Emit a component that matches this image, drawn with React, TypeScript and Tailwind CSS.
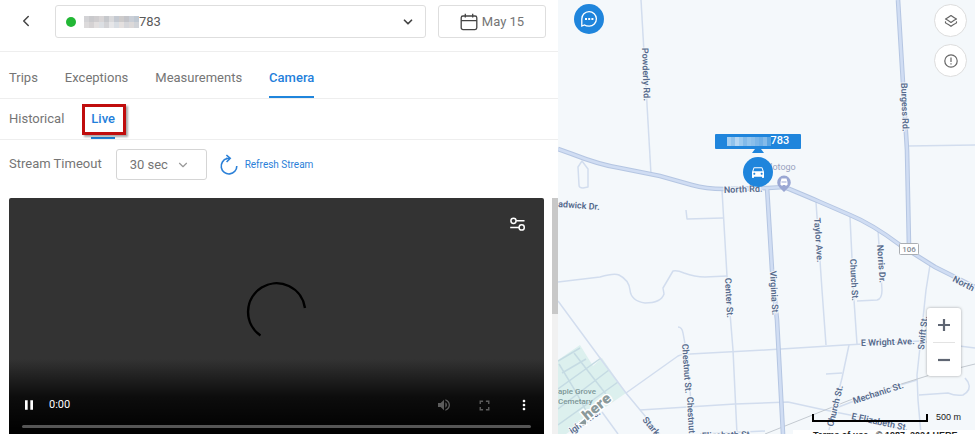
import { ChevronDown, ChevronLeft } from "lucide-react";
import { MdDirectionsCar, MdFullscreen, MdMoreVert, MdPause, MdVolumeUp } from "react-icons/md";

const TABS = ["Trips", "Exceptions", "Measurements", "Camera"];
const CAMERA_TABS = ["Historical", "Live"];

const MASK_COLORS = [
  "#d3d3d6", "#c9c9cc", "#cfcdcf", "#d8d5d6", "#c6c8cc", "#d9d9db", "#c4c9d1", "#cdcbcb", "#c3c4c9", "#c9ced6", "#bfc8d2",
  "#dcdadb", "#d5d2d3", "#e2dfdf", "#dcdfe3", "#d3d3d6", "#e6e6e8", "#d8dde3", "#e4e0df", "#d5d6da", "#dcd9d9", "#d0d3d8",
];

const PIN_MASK_COLORS = [
  "#a5cef0", "#8fc2ec", "#b4d6f3", "#9ccaef", "#83bbea", "#94c5ed", "#8abfeb", "#7bb6e8", "#6fafe6", "#84bbea", "#5aa4e2",
];

const MAIN_ROADS = [
  "M558 149 L572 154 Q600 165 620 168 L660 176 L692 185 Q706 189 724 189 L768 188 L784 187 Q792 190 820 202 L850 215 Q872 224 900 245 L935 267 L975 287",
  "M898 0 L907 150 L909 247",
  "M767 187 L772 270 L777 320 L783 434",
];

const STREETS = [
  "M641 0 L651 174",
  "M908 146 L975 145",
  "M722 190 L727 276 L733 350 L737 434",
  "M686 210 L687 219 L723 218",
  "M582 161 L578 167 L579 185 Q579 188 583 188 L588 187 L588 169 Z",
  "M558 282 L600 277 Q614 273 619 275 Q629 280 630 290 Q631 301 645 303 Q661 303 664 294 L663 288 L673 271 Q677 270 684 273 Q695 277 705 277 L727 276",
  "M816 202 L822 290 L826 345",
  "M850 217 L854 300 L857 344",
  "M878 230 L882 290 Q882 299 877 300 L857 301",
  "M930 265 L926 290 L917 375 L918 400 L921 434",
  "M626 393 L678 356 Q682 354 690 354 L765 350 L845 345 L920 341 L975 348",
  "M849 345 L842 378 L828 434",
  "M826 374 L842 373",
  "M640 410 L735 404 L788 402 L820 409 L860 417 L905 430",
  "M836 408 L880 391 L917 380",
  "M919 395 L948 393 Q955 396 963 395 Q972 390 968 382 L965 378",
  "M558 301 L600 358 L626 393 L660 434",
  "M602 412 L618 434",
  "M678 327 Q682 327 683 333 L688 360 L693 434",
  "M700 434 L765 431",
];

const CEMETERY_PATHS = [
  "M558 361 L580 348",
  "M562 373 L586 359",
  "M558 389 L601 358",
  "M558 409 L609 370",
  "M558 425 L618 382",
  "M574 353 L612 402",
  "M559 364 L576 392 L590 418",
];

const STREET_LABELS = [
  { text: "Powderly Rd.", x: 642, y: 48, angle: 88 },
  { text: "Burgess Rd.", x: 901, y: 83, angle: 88 },
  { text: "Taylor Ave.", x: 814, y: 218, angle: 86 },
  { text: "Church St.", x: 850, y: 259, angle: 87 },
  { text: "Norris Dr.", x: 877, y: 245, angle: 86 },
  { text: "Virginia St.", x: 770, y: 271, angle: 87 },
  { text: "Center St.", x: 725, y: 278, angle: 87 },
  { text: "Chestnut St.", x: 682, y: 344, angle: 86 },
  { text: "Chestnut", x: 687, y: 397, angle: 87 },
  { text: "North Rd.", x: 724, y: 193, angle: -2 },
  { text: "adwick Dr.", x: 558, y: 207, angle: 4 },
  { text: "North", x: 952, y: 281, angle: 27 },
  { text: "E Wright Ave.", x: 861, y: 346, angle: -2 },
  { text: "Swift St.", x: 924, y: 350, angle: -84 },
  { text: "Mechanic St.", x: 854, y: 404, angle: -18 },
  { text: "Church St.", x: 833, y: 427, angle: -76 },
  { text: "E Elizabeth St.", x: 851, y: 419, angle: 12 },
  { text: "Stark", x: 642, y: 420, angle: 50 },
  { text: "Elizabeth St.", x: 702, y: 439, angle: -2 },
  { text: "ight Ave.", x: 572, y: 434, angle: -35 },
];

function MaskedDigits() {
  return (
    <span aria-hidden="true" className="grid w-[55px] grid-cols-11 grid-rows-2">
      {MASK_COLORS.map((color, i) => (
        <span key={i} className="h-[6px]" style={{ backgroundColor: color }} />
      ))}
    </span>
  );
}

function DeviceHeader() {
  return (
    <header className="flex h-[52px] items-start border-b border-[#eeeeee] pt-[5px] pr-3">
      <button type="button" aria-label="Back" className="flex h-8 w-[55px] items-center pl-[17px] text-[#444]">
        <ChevronLeft size={18} strokeWidth={2} />
      </button>
      <div className="relative flex h-[33px] flex-1 items-center rounded-[3px] border border-[#dedede] pl-[10px]">
        <span className="mr-2 size-[10px] rounded-full bg-[#22b735]" />
        <MaskedDigits />
        <select aria-label="Vehicle" className="h-full flex-1 appearance-none bg-transparent text-[13px] text-[#5a5a5a] outline-none">
          <option>783</option>
        </select>
        <ChevronDown size={14} strokeWidth={3} className="pointer-events-none absolute right-[10px] text-[#444]" />
      </div>
      <button type="button" className="ml-3 flex h-[33px] w-[108px] items-center justify-center gap-1 rounded-[3px] border border-[#dedede] text-[13px] text-[#757575]">
        <svg width="18" height="18" viewBox="0 0 18 18" fill="none" stroke="#444" strokeWidth="1.3">
          <rect x="1.2" y="3" width="15.6" height="13.6" rx="1.8" />
          <path d="M1.2 7.6 H16.8 M5.3 0.8 V4.6 M12.7 0.8 V4.6" />
        </svg>
        May 15
      </button>
    </header>
  );
}

function StreamControls() {
  return (
    <div className="flex h-[58px] items-start px-[9px] pt-[9px] text-[13px] text-[#757575]">
      <label htmlFor="timeout" className="leading-[30px]">Stream Timeout</label>
      <div className="relative ml-[14px] flex h-[31px] w-[91px] items-center rounded-[3px] border border-[#d5d5d5]">
        <select id="timeout" className="h-full w-full appearance-none bg-transparent pl-[13px] outline-none">
          <option>30 sec</option>
        </select>
        <ChevronDown size={14} strokeWidth={2} className="pointer-events-none absolute right-4 text-[#999]" />
      </div>
      <button type="button" className="ml-3 flex h-[31px] items-center gap-[6px] text-[10px] text-[#2b80d8]">
        <svg width="20" height="22" viewBox="0 0 20 22" fill="none" stroke="currentColor" strokeWidth="1.6">
          <path d="M8 4.6 A7.8 7.8 0 1 0 17.8 12" />
          <path d="M7.4 1 L11.2 4.4 L7.6 8" />
          <path d="M7 4.5 H11" />
        </svg>
        Refresh Stream
      </button>
    </div>
  );
}

function VideoPlayer() {
  return (
    <section aria-label="Live stream" className="relative ml-[9px] flex flex-1 flex-col rounded-t-[2px] bg-[#333333]">
      <div className="flex justify-end pt-[18px] pr-[18px]">
        <button type="button" aria-label="Stream settings" className="text-white">
          <svg width="17" height="16" viewBox="0 0 17 16" fill="none" stroke="currentColor" strokeWidth="1.5">
            <circle cx="4.5" cy="4.8" r="2.6" />
            <path d="M7.2 4.8 H15.5 M1.2 11.4 H10" />
            <circle cx="12.7" cy="11.4" r="2.6" />
          </svg>
        </button>
      </div>
      <div className="flex flex-1 justify-center pt-12">
        <svg width="64" height="64" viewBox="1 0 64 64" fill="none" stroke="#000" strokeWidth="2.4" className="self-start">
          <path d="M16.5 55.5 A28.6 28.6 0 1 1 61 28" />
        </svg>
      </div>
      <div className="absolute inset-x-0 bottom-0 bg-linear-to-b from-transparent via-black/75 to-black px-[13px] pt-[36px] pb-[6px]">
        <div className="flex h-5 items-center text-white">
          <button type="button" aria-label="Pause" className="mr-3 -ml-px"><MdPause size={16} /></button>
          <span className="flex-1 text-[11px]">0:00</span>
          <button type="button" aria-label="Volume" className="mr-6 text-[#5c5c5c]"><MdVolumeUp size={16} /></button>
          <button type="button" aria-label="Full screen" className="mr-[23px] text-[#5c5c5c]"><MdFullscreen size={17} /></button>
          <button type="button" aria-label="More options" className="-mr-px"><MdMoreVert size={16} /></button>
        </div>
        <div className="mt-[10px] h-[3px] rounded-full bg-[#555]" />
      </div>
    </section>
  );
}

function MapCanvas() {
  return (
    <svg viewBox="558 0 417 434" preserveAspectRatio="xMinYMin slice" className="h-full w-full" fill="none">
      <path d="M558 360 L580 345 L593 366 L602 358 L626 393 L600 411 L566 434 L558 434 Z" fill="#dcf0ee" />
      {CEMETERY_PATHS.map((d) => (
        <path key={d} d={d} stroke="#c5dbe3" strokeWidth="1.5" />
      ))}
      {STREETS.map((d) => (
        <path key={d} d={d} stroke="#d2ddee" strokeWidth="1.5" strokeLinejoin="round" />
      ))}
      <path d="M765 434 L850 400 L930 375 L975 364" stroke="#c3c9d0" />
      {MAIN_ROADS.map((d) => (
        <path key={d} d={d} stroke="#b5c6e2" strokeWidth="4.6" />
      ))}
      {MAIN_ROADS.map((d) => (
        <path key={d} d={d} stroke="#d0ddf3" strokeWidth="2.6" />
      ))}
      <g fill="#566a8c" stroke="#f4f8fb" strokeWidth="2" paintOrder="stroke" className="font-['Roboto',sans-serif] text-[9px] font-semibold">
        {STREET_LABELS.map((l) => (
          <text key={`${l.text}-${l.x}`} transform={`translate(${l.x} ${l.y}) rotate(${l.angle})`}>
            {l.text}
          </text>
        ))}
      </g>
      <g className="font-['Roboto',sans-serif] text-[8px] font-medium">
        <text x="558" y="394" fill="#7d9798">aple Grove</text>
        <text x="558" y="404" fill="#7d9798">Cemetary</text>
      </g>
      <text x="766" y="170" fill="#99a2c0" className="font-['Roboto',sans-serif] text-[9px]">Notogo</text>
      {/* place pin */}
      <path d="M784 192 L779.5 187.5 A6.8 6.8 0 1 1 788.5 187.5 Z" fill="#9aa7d3" />
      <path d="M780.5 182 L781.5 178.5 H786.5 L787.5 182 V185 H786.5 V186 H785.5 V185 H782.5 V186 H781.5 V185 H780.5 Z" fill="#fff" />
      <path d="M781.5 182 H786.5" stroke="#9aa7d3" />
      {/* route shield */}
      <rect x="899.5" y="243.5" width="19" height="11" rx="1" fill="#fff" stroke="#aaaeb3" />
      <text x="909" y="252" textAnchor="middle" fill="#858b94" className="font-['Roboto',sans-serif] text-[8px] font-medium">106</text>
      {/* provider mark */}
      <g transform="translate(587 421) rotate(-40)" stroke="#fff" strokeWidth="3" paintOrder="stroke" fill="#8b9a9b">
        <path d="M-8 -3 L2 -3 L-3 2 Z" />
        <text className="font-['Open_Sans',sans-serif] text-[14px] font-extrabold">here</text>
      </g>
    </svg>
  );
}

function VehiclePin() {
  return (
    <div className="absolute top-[134px] left-[157px] flex w-[86px] flex-col items-center">
      <div className="flex h-[15px] w-full items-center justify-center rounded-[1px] bg-[#1f85dc] text-[11px] font-medium text-white">
        <span aria-hidden="true" className="flex">
          {PIN_MASK_COLORS.map((color, i) => (
            <span key={i} className="h-[9px] w-1" style={{ backgroundColor: color }} />
          ))}
        </span>
        783
      </div>
      <svg width="12" height="4" viewBox="0 0 12 4"><path d="M3 0 H9 L12 4 H0 Z" fill="#1f85dc" /></svg>
      <div className="mt-1 flex size-[30px] items-center justify-center rounded-full bg-[#1f85dc] text-white">
        <MdDirectionsCar size={16} />
      </div>
    </div>
  );
}

function MapPanel() {
  return (
    <section aria-label="Map" className="relative min-w-0 overflow-hidden bg-[#f4f8fb]">
      <MapCanvas />
      <VehiclePin />
      <button type="button" aria-label="Chat" className="absolute top-1 left-4 flex size-[30px] items-center justify-center rounded-full bg-[#1f85dc] text-white">
        <svg width="18" height="18" viewBox="0 0 18 18" fill="none" stroke="currentColor" strokeWidth="1.3">
          <path d="M1.8 16 V9 A7.3 7.3 0 1 1 9.2 16.2 Q6 16.2 4.5 15 Z" />
          <path d="M5 9 H7 M8.2 9 H10.2 M11.4 9 H13.4" strokeWidth="1.8" />
        </svg>
      </button>
      <div className="absolute top-1 right-2 flex flex-col gap-[7px] text-[#666]">
        <button type="button" aria-label="Map layers" className="flex size-[33px] items-center justify-center rounded-full border border-[#dddddd] bg-white">
          <svg width="14" height="14" viewBox="0 0 14 14" fill="none" stroke="currentColor" strokeWidth="1.2" strokeLinejoin="round">
            <path d="M1.5 5 Q3.5 4.2 7 1.6 Q10.5 4.2 12.5 5 Q10.5 6 7 8.4 Q3.5 6 1.5 5 Z" />
            <path d="M1.8 7.5 Q0.8 8.7 2.5 9.5 Q4 10 7 12.3 Q10 10 11.5 9.5 Q13.2 8.7 12.2 7.5" />
          </svg>
        </button>
        <button type="button" aria-label="Alerts" className="flex size-[33px] items-center justify-center rounded-full border border-[#dddddd] bg-white">
          <svg width="14" height="14" viewBox="0 0 14 14" fill="none" stroke="currentColor" strokeWidth="1.2">
            <circle cx="7" cy="7" r="6.2" />
            <path d="M7 3.6 V8 M7 9.2 V10.5" />
          </svg>
        </button>
      </div>
      <div className="absolute right-[14px] bottom-[58px] flex w-[34px] flex-col items-center rounded-[3px] bg-white text-[#5f6673] shadow-[0_0_3px_rgba(0,0,0,0.35)]">
        <button type="button" aria-label="Zoom in" className="flex h-[34px] w-full items-center justify-center">
          <svg width="12" height="12" viewBox="0 0 12 12" stroke="currentColor" strokeWidth="2.2"><path d="M0 6 H12 M6 0 V12" /></svg>
        </button>
        <span className="h-px w-[22px] bg-[#e3e3e3]" />
        <button type="button" aria-label="Zoom out" className="flex h-[33px] w-full items-center justify-center">
          <svg width="12" height="12" viewBox="0 0 12 12" stroke="currentColor" strokeWidth="2.2"><path d="M0 6 H12" /></svg>
        </button>
      </div>
      <div className="absolute right-[14px] bottom-3 flex items-end gap-2">
        <span className="h-2 w-[116px] border-x-2 border-b-2 border-black" />
        <span className="font-['Liberation_Sans',sans-serif] text-[9px] leading-[10px] text-[#222]">500 m</span>
      </div>
      <p className="absolute right-0 bottom-0 h-1 w-[182px] overflow-hidden bg-white pl-5 font-['Liberation_Sans',sans-serif] text-[9px] leading-[11px] font-bold whitespace-nowrap text-[#222]">
        Terms of use &nbsp; © 1987–2024 HERE
      </p>
    </section>
  );
}

export default function App() {
  return (
    <div className="grid h-screen grid-cols-[558fr_417fr] overflow-hidden bg-white font-['Roboto',sans-serif]">
      <main className="flex min-w-0 flex-col">
        <DeviceHeader />
        <nav className="flex h-[47px] gap-[27px] border-b border-[#eeeeee] px-[9px] text-[13px] text-[#757575]">
          {TABS.map((tab) => (
            <a
              key={tab}
              href="#"
              className={tab === "Camera" ? "border-b-2 border-[#1f85dc] pt-4 font-medium text-[#1f7fdb]" : "pt-4"}
            >
              {tab}
            </a>
          ))}
        </nav>
        <nav className="flex h-[41px] gap-[27px] border-b border-[#eeeeee] px-[9px] text-[13px] text-[#757575]">
          {CAMERA_TABS.map((tab) => (
            <a
              key={tab}
              href="#"
              className={tab === "Live" ? "relative border-b-2 border-[#1f85dc] pt-[10px] font-medium text-[#1f7fdb]" : "pt-[10px]"}
            >
              {tab}
              {tab === "Live" && (
                <span className="absolute top-[5px] -right-[11px] -left-[9px] h-[31px] border-3 border-[#c00d0d] shadow-[2px_2px_2px_rgba(0,0,0,0.35)]" />
              )}
            </a>
          ))}
        </nav>
        <StreamControls />
        <div className="flex flex-1 gap-2">
          <VideoPlayer />
          <div className="w-[6px] bg-[#f1f1f1]">
            <div className="h-[49%] bg-[#c8c8c8]" />
          </div>
        </div>
      </main>
      <MapPanel />
    </div>
  );
}
